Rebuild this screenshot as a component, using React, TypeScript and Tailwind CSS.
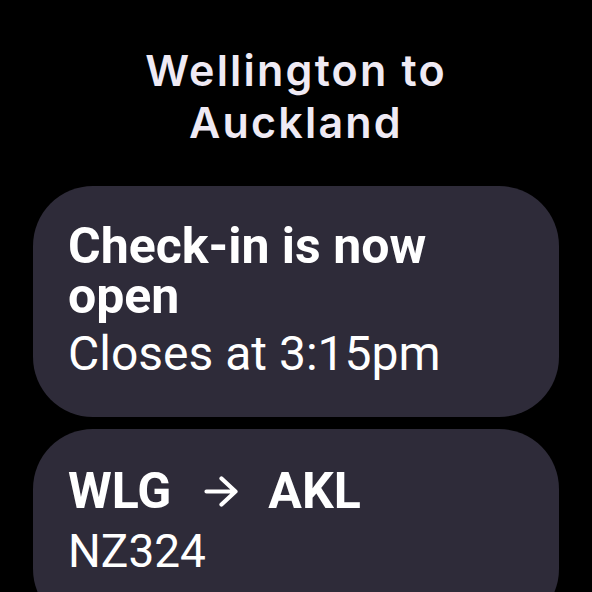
const Card = ({ children, className = '' }: { children: React.ReactNode; className?: string }) => (
  <div className={`rounded-[60px] bg-[#2e2b39] px-[35px] text-white ${className}`}>{children}</div>
);

const App = () => {
  return (
    <div className="h-[592px] w-[592px] overflow-hidden bg-black font-['Roboto',sans-serif]">
      <div className="pt-[44px] text-center font-['Inter',sans-serif] text-[43px] font-semibold leading-[52px] tracking-[2.2px] text-[#efeaf4]">
        Wellington to
        <br />
        Auckland
      </div>
      <div className="mx-[33px] mt-[38px] flex flex-col gap-[12px]">
        <Card className="h-[231px] pt-[35px]">
          <div className="text-[50px] font-bold leading-[50px]">
            Check-in is now
            <br />
            open
          </div>
          <div className="mt-[5px] text-[48px] leading-[56px]">Closes at 3:15pm</div>
        </Card>
        <Card className="h-[200px] pt-[35px]">
          <div className="flex items-center text-[50px] font-bold leading-[54px]">
            <span>WLG</span>
            <svg viewBox="0 0 34 31" className="ml-[33px] mr-[30px] h-[31px] w-[34px]" fill="none">
              <path
                d="M2.5 15.5H31.5M17.5 2.5L31.5 15.5L17.5 28.5"
                stroke="currentColor"
                strokeWidth="4.2"
                strokeLinecap="round"
                strokeLinejoin="round"
              />
            </svg>
            <span>AKL</span>
          </div>
          <div className="mt-[7px] text-[46px] leading-[52px]">NZ324</div>
        </Card>
      </div>
    </div>
  );
};

export default App;
